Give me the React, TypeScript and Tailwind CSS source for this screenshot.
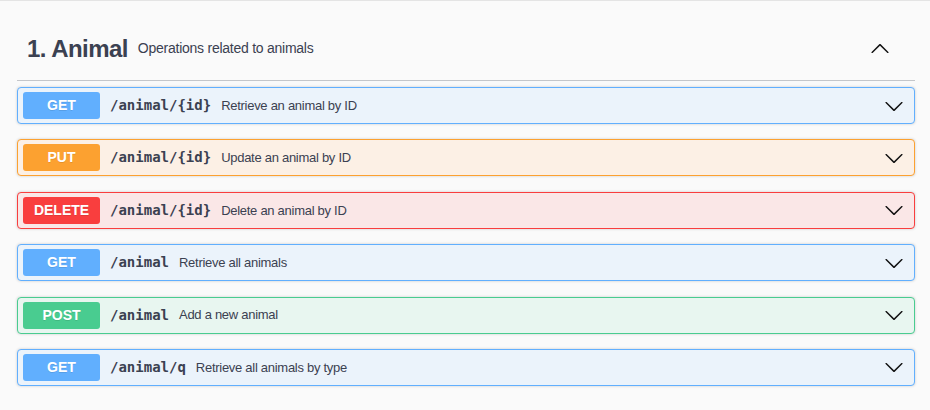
import React from "react";

type Op = {
  method: "GET" | "PUT" | "DELETE" | "POST";
  path: string;
  summary: string;
};

const ops: Op[] = [
  { method: "GET", path: "/animal/{id}", summary: "Retrieve an animal by ID" },
  { method: "PUT", path: "/animal/{id}", summary: "Update an animal by ID" },
  { method: "DELETE", path: "/animal/{id}", summary: "Delete an animal by ID" },
  { method: "GET", path: "/animal", summary: "Retrieve all animals" },
  { method: "POST", path: "/animal", summary: "Add a new animal" },
  { method: "GET", path: "/animal/q", summary: "Retrieve all animals by type" },
];

const styles: Record<Op["method"], { row: string; badge: string }> = {
  GET: { row: "border-[#61affe] bg-[#ebf3fb]", badge: "bg-[#61affe]" },
  PUT: { row: "border-[#fca130] bg-[#fcf0e5]", badge: "bg-[#fca130]" },
  DELETE: { row: "border-[#f93e3e] bg-[#fae7e7]", badge: "bg-[#f93e3e]" },
  POST: { row: "border-[#49cc90] bg-[#e8f6f0]", badge: "bg-[#49cc90]" },
};

function Chevron({ up = false }: { up?: boolean }) {
  return (
    <svg
      width="20"
      height="20"
      viewBox="0 0 20 20"
      className={up ? "rotate-180" : ""}
      aria-hidden
    >
      <path
        fill="#111"
        d="M17.418 6.109c.272-.268.709-.268.979 0s.271.701 0 .969l-7.908 7.83c-.27.268-.707.268-.979 0l-7.908-7.83c-.27-.268-.27-.701 0-.969.271-.268.709-.268.979 0L10 13.25l7.418-7.141z"
      />
    </svg>
  );
}

function OpRow({ op }: { op: Op }) {
  const s = styles[op.method];
  return (
    <div
      className={`mb-[15.4px] flex h-[37px] items-center rounded-[4px] border px-[5px] shadow-[0_0_3px_rgba(0,0,0,0.19)] ${s.row}`}
    >
      <span
        className={`flex h-[27px] w-[77px] shrink-0 items-center justify-center rounded-[3px] text-[14px] font-bold text-white [text-shadow:0_1px_0_rgba(0,0,0,0.1)] ${s.badge}`}
      >
        {op.method}
      </span>
      <span className="px-[10px] font-['DejaVu_Sans_Mono',monospace] text-[14px] font-bold text-[#3b4151]">
        {op.path}
      </span>
      <span className="flex-1 text-[13px] tracking-[-0.28px] text-[#3b4151]">{op.summary}</span>
      <span className="mr-[5px] flex items-center">
        <Chevron />
      </span>
    </div>
  );
}

export default function App() {
  return (
    <div className="min-h-[410px] border-t border-[#e4e4e4] bg-[#fafafa] pl-[17px] pr-[15px] pt-[16px] font-['Liberation_Sans',Arial,sans-serif]">
      {/* Tag header */}
      <div className="mb-[6px] flex h-[64px] items-center border-b border-[#c4c6ca] pl-[10px] pr-[25px]">
        <h3 className="text-[24px] font-bold leading-none tracking-[-0.55px] text-[#3b4151]">1. Animal</h3>
        <span className="px-[10px] text-[14px] tracking-[-0.25px] text-[#3b4151]">
          Operations related to animals
        </span>
        <span className="ml-auto flex items-center">
          <Chevron up />
        </span>
      </div>

      {ops.map((op, i) => (
        <OpRow key={i} op={op} />
      ))}
    </div>
  );
}
